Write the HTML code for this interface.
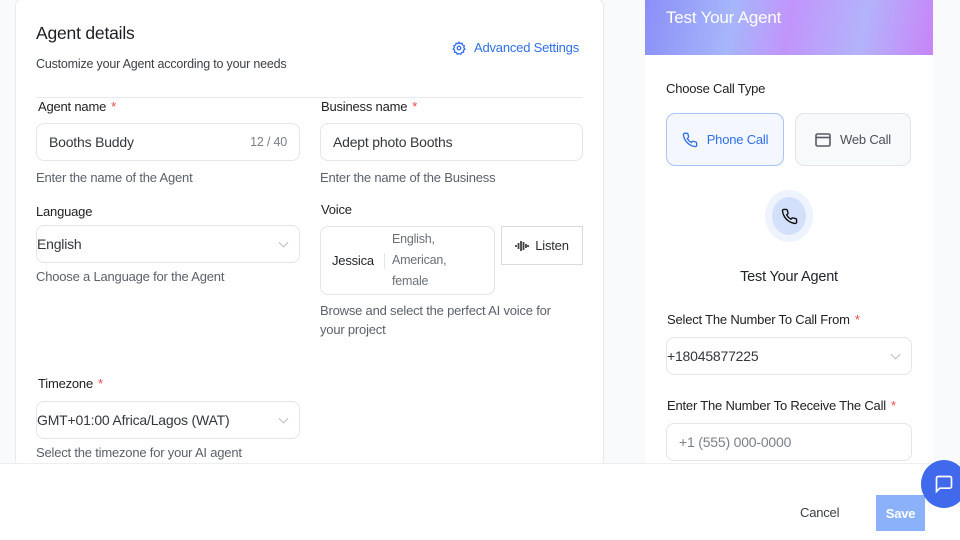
<!DOCTYPE html>
<html><head><style>
*{box-sizing:border-box;margin:0;padding:0}
body{width:960px;height:540px;overflow:hidden;background:#f9fafb;font-family:"Liberation Sans",sans-serif;position:relative;color:#1f2328;letter-spacing:-0.2px}
.abs{position:absolute}
.card{left:15px;top:-2px;width:589px;height:470px;background:#fff;border:1px solid #e8eaee;border-radius:8px}
.lbl{font-size:13px;color:#222}
.star{color:#e5484d;margin-left:5px}
.hint{font-size:13px;color:#5b616b}
.inp{border:1px solid #e3e5e9;border-radius:8px;background:#fff;font-size:14px;color:#33373d;display:flex;align-items:center}
.chev{position:absolute;right:12px;top:50%;width:7px;height:7px;border-right:1px solid #b9bdc4;border-bottom:1px solid #b9bdc4;transform:translateY(-70%) rotate(45deg)}
</style></head><body>
<div class="abs card"></div>
<div class="abs" style="left:36px;top:23px;font-size:17.5px;color:#1b1f24">Agent details</div>
<div class="abs" style="left:36px;top:57px;font-size:12.5px;color:#3d4249">Customize your Agent according to your needs</div>
<div class="abs" style="left:452px;top:40px;font-size:13px;color:#2f6fe8;display:flex;align-items:center;gap:8px">
<svg width="14" height="14" viewBox="0 0 24 24" fill="none" stroke="#2f6fe8" stroke-width="2.2"><circle cx="12" cy="12" r="3"/><path d="M12 2l2 2.5 3.2-.6.9 3.1 3 1.3-1 3.1 2 2.6-2.5 2 .3 3.3-3.2.5-1.5 2.9-3.2-1.2-3 1.2-1.5-2.9-3.2-.5.3-3.3-2.5-2 2-2.6-1-3.1 3-1.3.9-3.1 3.2.6z"/></svg>Advanced Settings</div>
<div class="abs" style="left:36px;top:97px;width:547px;height:1px;background:#e8eaee"></div>

<div class="abs lbl" style="left:38px;top:99px">Agent name<span class="star">*</span></div>
<div class="abs inp" style="left:36px;top:123px;width:264px;height:38px;padding-left:12px">Booths Buddy<span style="position:absolute;right:12px;font-size:12.5px;color:#7a8089">12 / 40</span></div>
<div class="abs hint" style="left:36px;top:170px">Enter the name of the Agent</div>

<div class="abs lbl" style="left:321px;top:99px">Business name<span class="star">*</span></div>
<div class="abs inp" style="left:320px;top:123px;width:263px;height:38px;padding-left:12px">Adept photo Booths</div>
<div class="abs hint" style="left:320px;top:170px">Enter the name of the Business</div>

<div class="abs lbl" style="left:36px;top:204px">Language</div>
<div class="abs inp" style="left:36px;top:225px;width:264px;height:38px;padding-left:0">English<span class="chev"></span></div>
<div class="abs hint" style="left:36px;top:269px">Choose a Language for the Agent</div>

<div class="abs lbl" style="left:321px;top:202px">Voice</div>
<div class="abs inp" style="left:320px;top:226px;width:175px;height:69px;padding-left:11px">
<span style="font-size:13px;color:#1f2328">Jessica</span><span style="width:1px;height:16px;background:#e3e5e9;margin:0 7px 0 10px"></span>
<span style="font-size:12.5px;color:#6b7079;line-height:21px">English,<br>American,<br>female</span></div>
<div class="abs" style="left:501px;top:226px;width:82px;height:39px;border:1px solid #d8dbe0;background:#fff;display:flex;align-items:center;justify-content:center;gap:6px;font-size:13px;color:#2b2f35">
<svg width="14" height="12" viewBox="0 0 14 12"><g stroke="#444" stroke-width="1.8"><path d="M1 5v2M3.5 3v6M6 1v10M8.5 2v8M11 4v4M13 5v2"/></g></svg>Listen</div>
<div class="abs hint" style="left:320px;top:301px;line-height:19px;width:250px">Browse and select the perfect AI voice for your project</div>

<div class="abs lbl" style="left:38px;top:376px">Timezone<span class="star">*</span></div>
<div class="abs inp" style="left:36px;top:401px;width:264px;height:38px">GMT+01:00 Africa/Lagos (WAT)<span class="chev"></span></div>
<div class="abs hint" style="left:36px;top:445px">Select the timezone for your AI agent</div>

<div class="abs" style="left:645px;top:0;width:288px;height:470px;background:#fff"></div>
<div class="abs" style="left:645px;top:0;width:288px;height:55px;background:linear-gradient(100deg,#8a8ff7 0%,#a6b6fb 30%,#c195fb 50%,#b3b3fb 75%,#c884f8 100%)"></div>
<div class="abs" style="left:666px;top:8px;font-size:17px;color:#fff">Test Your Agent</div>
<div class="abs lbl" style="left:666px;top:81px">Choose Call Type</div>
<div class="abs" style="left:666px;top:113px;width:118px;height:53px;border:1.5px solid #a9c3fb;border-radius:9px;background:#f4f7ff;display:flex;align-items:center;justify-content:center;gap:9px;font-size:13px;color:#2f6fe8">
<svg width="16" height="16" viewBox="0 0 24 24" fill="none" stroke="#2f6fe8" stroke-width="2"><path d="M22 16.9v3a2 2 0 0 1-2.2 2 19.8 19.8 0 0 1-8.6-3.1 19.5 19.5 0 0 1-6-6A19.8 19.8 0 0 1 2.1 4.2 2 2 0 0 1 4.1 2h3a2 2 0 0 1 2 1.7c.1 1 .4 1.9.7 2.8a2 2 0 0 1-.5 2.1L8 9.800a16 16 0 0 0 6 6l1.3-1.3a2 2 0 0 1 2.1-.4c.9.3 1.8.6 2.8.7a2 2 0 0 1 1.7 2z"/></svg>Phone Call</div>
<div class="abs" style="left:795px;top:113px;width:116px;height:53px;border:1px solid #e2e4e8;border-radius:9px;background:#f8f9fa;display:flex;align-items:center;justify-content:center;gap:9px;font-size:13px;color:#4b5058">
<svg width="16" height="14" viewBox="0 0 16 14" fill="none" stroke="#555a62" stroke-width="1.6"><rect x="1" y="1" width="14" height="12" rx="1.5"/><path d="M1 4.5h14"/></svg>Web Call</div>
<div class="abs" style="left:765px;top:190px;width:48px;height:52px;border-radius:50%;background:#eef3fe"></div>
<div class="abs" style="left:772px;top:197px;width:34px;height:38px;border-radius:50%;background:#d3e0fb;display:flex;align-items:center;justify-content:center">
<svg width="17" height="17" viewBox="0 0 24 24" fill="none" stroke="#111" stroke-width="2"><path d="M22 16.9v3a2 2 0 0 1-2.2 2 19.8 19.8 0 0 1-8.6-3.1 19.5 19.5 0 0 1-6-6A19.8 19.8 0 0 1 2.1 4.2 2 2 0 0 1 4.1 2h3a2 2 0 0 1 2 1.7c.1 1 .4 1.9.7 2.8a2 2 0 0 1-.5 2.1L8 9.8a16 16 0 0 0 6 6l1.3-1.3a2 2 0 0 1 2.1-.4c.9.3 1.8.6 2.8.7a2 2 0 0 1 1.7 2z"/></svg></div>
<div class="abs" style="left:645px;top:269px;width:288px;text-align:center;font-size:14.5px;color:#1f2328">Test Your Agent</div>
<div class="abs lbl" style="left:667px;top:312px">Select The Number To Call From<span class="star">*</span></div>
<div class="abs inp" style="left:666px;top:337px;width:246px;height:38px">+18045877225<span class="chev"></span></div>
<div class="abs lbl" style="left:667px;top:398px">Enter The Number To Receive The Call<span class="star">*</span></div>
<div class="abs inp" style="left:666px;top:423px;width:246px;height:38px;padding-left:12px;color:#7a8089">+1 (555) 000-0000</div>

<div class="abs" style="left:0;top:463px;width:960px;height:77px;background:#fff;border-top:1px solid #eceef1"></div>
<div class="abs" style="left:800px;top:505px;font-size:13px;color:#3a3f46">Cancel</div>
<div class="abs" style="left:876px;top:495px;width:49px;height:36px;background:#8cb1fb;display:flex;align-items:center;justify-content:center;font-size:13px;font-weight:bold;color:#fff">Save</div>
<div class="abs" style="left:921px;top:460px;width:46px;height:48px;border-radius:50%;background:#4169ec;display:flex;align-items:center;justify-content:center">
<svg width="20" height="20" viewBox="0 0 24 24" fill="none" stroke="#fff" stroke-width="2"><path d="M21 15a2 2 0 0 1-2 2H7l-4 4V5a2 2 0 0 1 2-2h14a2 2 0 0 1 2 2z"/></svg></div>
</body></html>
